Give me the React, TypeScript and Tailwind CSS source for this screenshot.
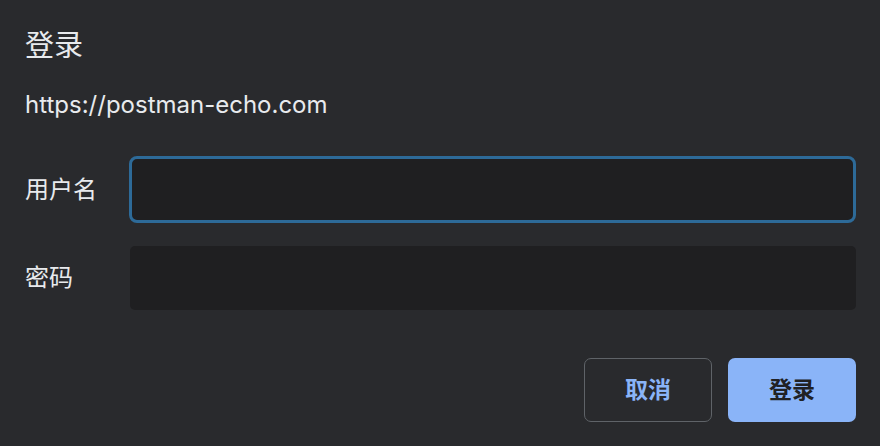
import React from "react";

export default function App() {
  const font = { fontFamily: '"Inter", "Noto Sans CJK SC", sans-serif' };
  return (
    <div
      className="w-[880px] h-[446px] bg-[#292a2d] text-[#e8eaed] pl-[25px] pr-[24px] pt-[28px] flex flex-col"
      style={font}
    >
      <div className="text-[29px] leading-[36px] h-[36px]">登录</div>
      <div className="mt-[26px] text-[24px] leading-[30px] h-[30px]">https://postman-echo.com</div>
      <div className="mt-[36px] flex items-center">
        <div className="w-[104px] text-[24px]">用户名</div>
        <input className="w-[728px] h-[67px] rounded-[8px] bg-[#1f1f21] outline-none border-[3px] border-[#2d6a98]" />
      </div>
      <div className="mt-[23px] flex items-center">
        <div className="w-[105px] text-[24px]">密码</div>
        <input type="password" className="w-[726px] h-[64px] rounded-[5px] bg-[#1f1f21] outline-none" />
      </div>
      <div className="mt-[48px] flex justify-end gap-[16px]">
        <button className="w-[128px] h-[64px] rounded-[7px] border border-[#5f6368] text-[#8ab4f8] text-[23px] font-bold">
          取消
        </button>
        <button className="w-[128px] h-[64px] rounded-[7px] bg-[#8ab4f8] text-[#202124] text-[23px] font-bold">
          登录
        </button>
      </div>
    </div>
  );
}
